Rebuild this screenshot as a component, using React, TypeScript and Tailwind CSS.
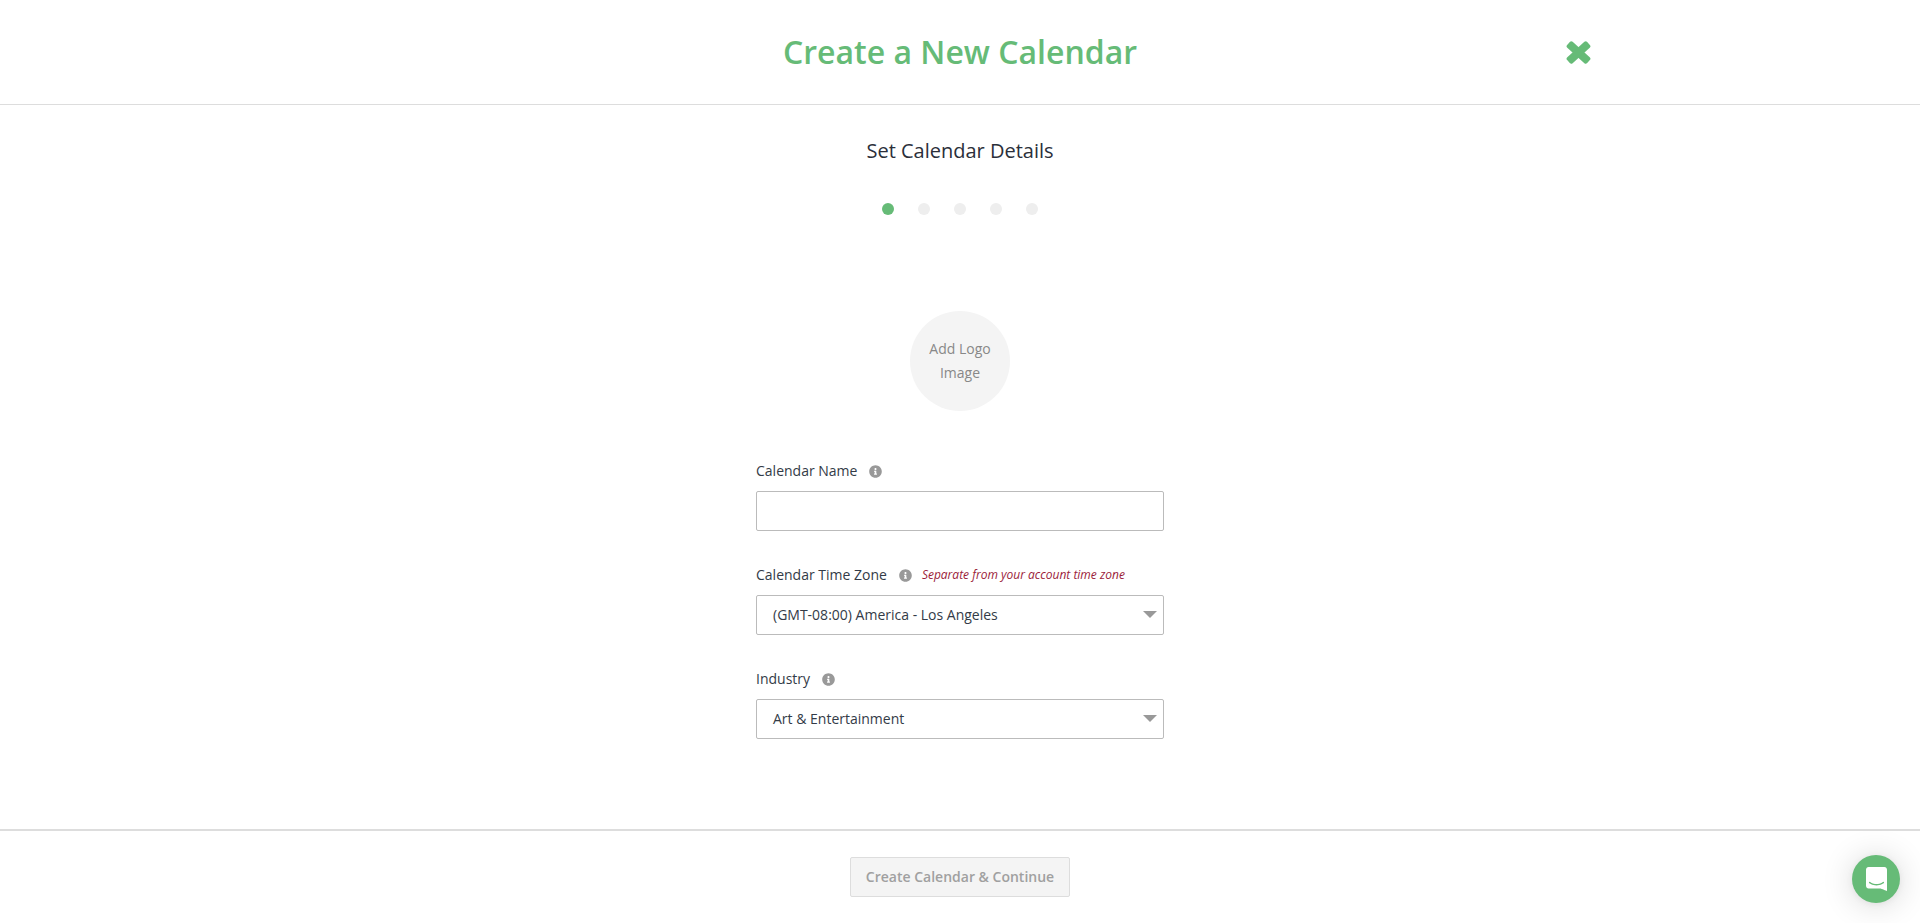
import { FaInfoCircle } from 'react-icons/fa'

const font = { fontFamily: '"Open Sans", sans-serif' }

function InfoIcon() {
  return <FaInfoCircle size={13} className="text-[#999999]" />
}

function Caret() {
  return <div className="w-0 h-0 -mt-[1px] border-l-[7px] border-r-[7px] border-t-[7px] border-l-transparent border-r-transparent border-t-[#999999]" />
}

function Select({ value }: { value: string }) {
  return (
    <div className="h-10 border border-[#bbbbbb] rounded-[2px] bg-white flex items-center justify-between pl-4 pr-[6px] text-sm text-[#333b47]">
      <span>{value}</span>
      <Caret />
    </div>
  )
}

export default function App() {
  return (
    <div className="h-screen flex flex-col bg-white relative overflow-hidden" style={font}>
      {/* Header */}
      <div className="h-[105px] shrink-0 border-b border-[#dddddd] relative flex items-center justify-center">
        <h1 className="text-[32px] font-semibold text-[#66bb77]">Create a New Calendar</h1>
        <button className="absolute left-[1566px] top-[41px]">
          <svg width="25" height="23" viewBox="0 0 25 23" fill="#66bb77">
            <rect x="-13.5" y="-4" width="27" height="8" rx="2" transform="translate(12.5 11.5) rotate(42)" />
            <rect x="-13.5" y="-4" width="27" height="8" rx="2" transform="translate(12.5 11.5) rotate(-42)" />
          </svg>
        </button>
      </div>

      {/* Body */}
      <div className="flex-1 flex flex-col items-center">
        <h2 className="mt-[32px] text-[20px] leading-[28px] text-[#2b2f3a]">Set Calendar Details</h2>
        <div className="mt-[38px] flex gap-6">
          <div className="w-3 h-3 rounded-full bg-[#66bb77]" />
          <div className="w-3 h-3 rounded-full bg-[#eeeeee]" />
          <div className="w-3 h-3 rounded-full bg-[#eeeeee]" />
          <div className="w-3 h-3 rounded-full bg-[#eeeeee]" />
          <div className="w-3 h-3 rounded-full bg-[#eeeeee]" />
        </div>

        <div className="mt-[96px] w-[100px] h-[100px] rounded-full bg-[#f4f4f4] flex items-center justify-center text-center text-sm leading-6 text-[#888888]">
          Add Logo<br />Image
        </div>

        <div className="mt-[50px] w-[408px] flex flex-col gap-[34px]">
          <div>
            <div className="h-5 mb-[10px] flex items-center gap-3 text-sm text-[#333b47]">
              <span>Calendar Name</span>
              <InfoIcon />
            </div>
            <div className="h-10 border border-[#bbbbbb] rounded-[2px] bg-white" />
          </div>

          <div>
            <div className="h-5 mb-[10px] flex items-center gap-3 text-sm text-[#333b47]">
              <span>Calendar Time Zone</span>
              <InfoIcon />
              <span className="ml-[-2px] text-xs italic text-[#9b1c3a]">Separate from your account time zone</span>
            </div>
            <Select value="(GMT-08:00) America - Los Angeles" />
          </div>

          <div>
            <div className="h-5 mb-[10px] flex items-center gap-3 text-sm text-[#333b47]">
              <span>Industry</span>
              <InfoIcon />
            </div>
            <Select value="Art & Entertainment" />
          </div>
        </div>
      </div>

      {/* Footer */}
      <div className="h-[94px] shrink-0 border-t-2 border-[#dddddd] flex items-start justify-center pt-[26px]">
        <button className="w-[220px] h-10 bg-[#f4f4f4] border border-[#dddddd] rounded-[2px] text-sm font-semibold text-[#a0a0a0]">
          Create Calendar &amp; Continue
        </button>
      </div>

      {/* Chat launcher */}
      <div className="absolute right-5 bottom-5 w-12 h-12 rounded-full bg-[#66bb77] flex items-center justify-center shadow-[0_1px_6px_rgba(0,0,0,0.06),0_2px_32px_rgba(0,0,0,0.16)]">
        <svg width="21" height="24" viewBox="0 0 28 32" fill="#ffffff">
          <path d="M28 32s-4.714-1.855-8.527-3.34H3.437C1.54 28.66 0 27.026 0 25.013V3.644C0 1.633 1.54 0 3.437 0h21.125c1.898 0 3.437 1.632 3.437 3.645v18.404H28V32zm-4.139-11.982a.88.88 0 00-1.292-.105c-.03.026-3.308 2.681-8.57 2.681-5.2 0-8.518-2.636-8.571-2.68a.88.88 0 00-1.29.106 1.01 1.01 0 00.1 1.374c.158.136 3.902 3.14 9.761 3.14 5.86 0 9.603-3.004 9.76-3.14a1.01 1.01 0 00.102-1.376z" />
        </svg>
      </div>
    </div>
  )
}
